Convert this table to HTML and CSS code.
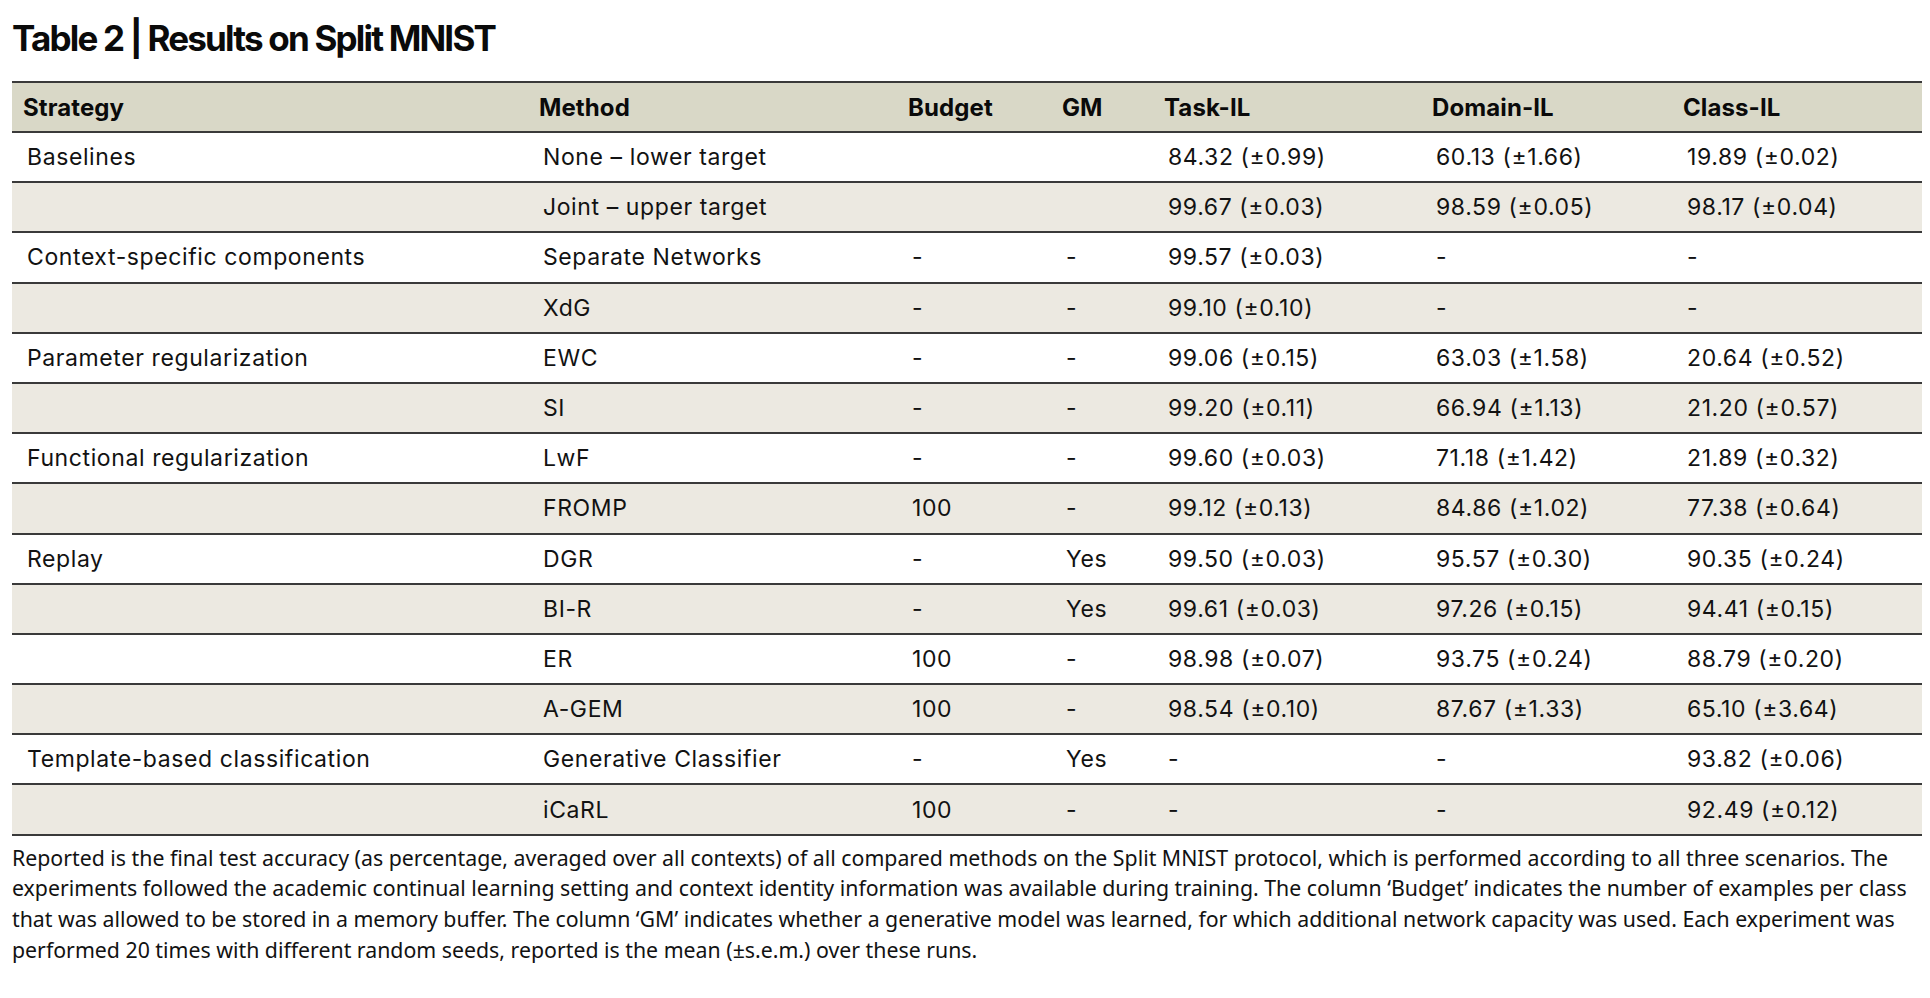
FILE: index.html
```html
<!DOCTYPE html>
<html lang="en">
<head>
<meta charset="utf-8">
<title>Table 2 | Results on Split MNIST</title>
<link rel="stylesheet" href="styles.css">
</head>
<body>
<main class="page">
  <h1 class="title">Table 2 | Results on Split MNIST</h1>
  <table class="results">
    <colgroup>
      <col class="c-strategy">
      <col class="c-method">
      <col class="c-budget">
      <col class="c-gm">
      <col class="c-task">
      <col class="c-domain">
      <col class="c-class">
    </colgroup>
    <thead>
      <tr>
        <th>Strategy</th><th>Method</th><th>Budget</th><th>GM</th><th>Task-IL</th><th>Domain-IL</th><th>Class-IL</th>
      </tr>
    </thead>
    <tbody>
      <tr><td>Baselines</td><td>None – lower target</td><td></td><td></td><td>84.32 (±0.99)</td><td>60.13 (±1.66)</td><td>19.89 (±0.02)</td></tr>
      <tr><td></td><td>Joint – upper target</td><td></td><td></td><td>99.67 (±0.03)</td><td>98.59 (±0.05)</td><td>98.17 (±0.04)</td></tr>
      <tr><td>Context-specific components</td><td>Separate Networks</td><td>-</td><td>-</td><td>99.57 (±0.03)</td><td>-</td><td>-</td></tr>
      <tr><td></td><td>XdG</td><td>-</td><td>-</td><td>99.10 (±0.10)</td><td>-</td><td>-</td></tr>
      <tr><td>Parameter regularization</td><td>EWC</td><td>-</td><td>-</td><td>99.06 (±0.15)</td><td>63.03 (±1.58)</td><td>20.64 (±0.52)</td></tr>
      <tr><td></td><td>SI</td><td>-</td><td>-</td><td>99.20 (±0.11)</td><td>66.94 (±1.13)</td><td>21.20 (±0.57)</td></tr>
      <tr><td>Functional regularization</td><td>LwF</td><td>-</td><td>-</td><td>99.60 (±0.03)</td><td>71.18 (±1.42)</td><td>21.89 (±0.32)</td></tr>
      <tr><td></td><td>FROMP</td><td>100</td><td>-</td><td>99.12 (±0.13)</td><td>84.86 (±1.02)</td><td>77.38 (±0.64)</td></tr>
      <tr><td>Replay</td><td>DGR</td><td>-</td><td>Yes</td><td>99.50 (±0.03)</td><td>95.57 (±0.30)</td><td>90.35 (±0.24)</td></tr>
      <tr><td></td><td>BI-R</td><td>-</td><td>Yes</td><td>99.61 (±0.03)</td><td>97.26 (±0.15)</td><td>94.41 (±0.15)</td></tr>
      <tr><td></td><td>ER</td><td>100</td><td>-</td><td>98.98 (±0.07)</td><td>93.75 (±0.24)</td><td>88.79 (±0.20)</td></tr>
      <tr><td></td><td>A-GEM</td><td>100</td><td>-</td><td>98.54 (±0.10)</td><td>87.67 (±1.33)</td><td>65.10 (±3.64)</td></tr>
      <tr><td>Template-based classification</td><td>Generative Classifier</td><td>-</td><td>Yes</td><td>-</td><td>-</td><td>93.82 (±0.06)</td></tr>
      <tr><td></td><td>iCaRL</td><td>100</td><td>-</td><td>-</td><td>-</td><td>92.49 (±0.12)</td></tr>
    </tbody>
  </table>
  <p class="note">Reported is the final test accuracy (as percentage, averaged over all contexts) of all compared methods on the Split MNIST protocol, which is performed according to all three scenarios. The<br>experiments followed the academic continual learning setting and context identity information was available during training. The column ‘Budget’ indicates the number of examples per class<br>that was allowed to be stored in a memory buffer. The column ‘GM’ indicates whether a generative model was learned, for which additional network capacity was used. Each experiment was<br>performed 20 times with different random seeds, reported is the mean (±s.e.m.) over these runs.</p>
</main>
</body>
</html>
```

FILE: styles.css
```css
html, body {
  margin: 0;
  padding: 0;
  background: #ffffff;
}

body {
  font-family: Inter, "Noto Sans", "Liberation Sans", sans-serif;
  color: #121212;
}

.page {
  width: 1910px;
  padding: 0 0 0 12px;
}

.title {
  margin: 18px 0 23px 0;
  font-size: 35px;
  line-height: 40px;
  font-weight: 700;
  letter-spacing: -1.8px;
  color: #0a0a0a;
}

.results {
  width: 1910px;
  table-layout: fixed;
  border-collapse: separate;
  border-spacing: 0;
  font-size: 23px;
}

.c-strategy { width: 516px; }
.c-method { width: 369px; }
.c-budget { width: 154px; }
.c-gm { width: 102px; }
.c-task { width: 268px; }
.c-domain { width: 251px; }
.c-class { width: 250px; }

.results th {
  background: #d9d8c7;
  border-top: 2px solid #3a3a3a;
  border-bottom: 2px solid #3a3a3a;
  height: 48px;
  padding: 0 0 0 11px;
  text-align: left;
  vertical-align: middle;
  font-size: 24px;
  font-weight: 700;
  letter-spacing: 0.1px;
  color: #0a0a0a;
}

.results td {
  border-bottom: 2px solid #3a3a3a;
  height: 48.2px;
  padding: 0 0 0 15px;
  vertical-align: middle;
  white-space: nowrap;
  letter-spacing: 0.6px;
}

.results tbody tr:nth-child(even) td {
  background: #ece9e1;
}

.note {
  margin: 7px 0 0 0;
  font-family: "Noto Sans", Inter, sans-serif;
  font-size: 21.3px;
  line-height: 30.7px;
  white-space: nowrap;
  width: 1910px;
}
```
